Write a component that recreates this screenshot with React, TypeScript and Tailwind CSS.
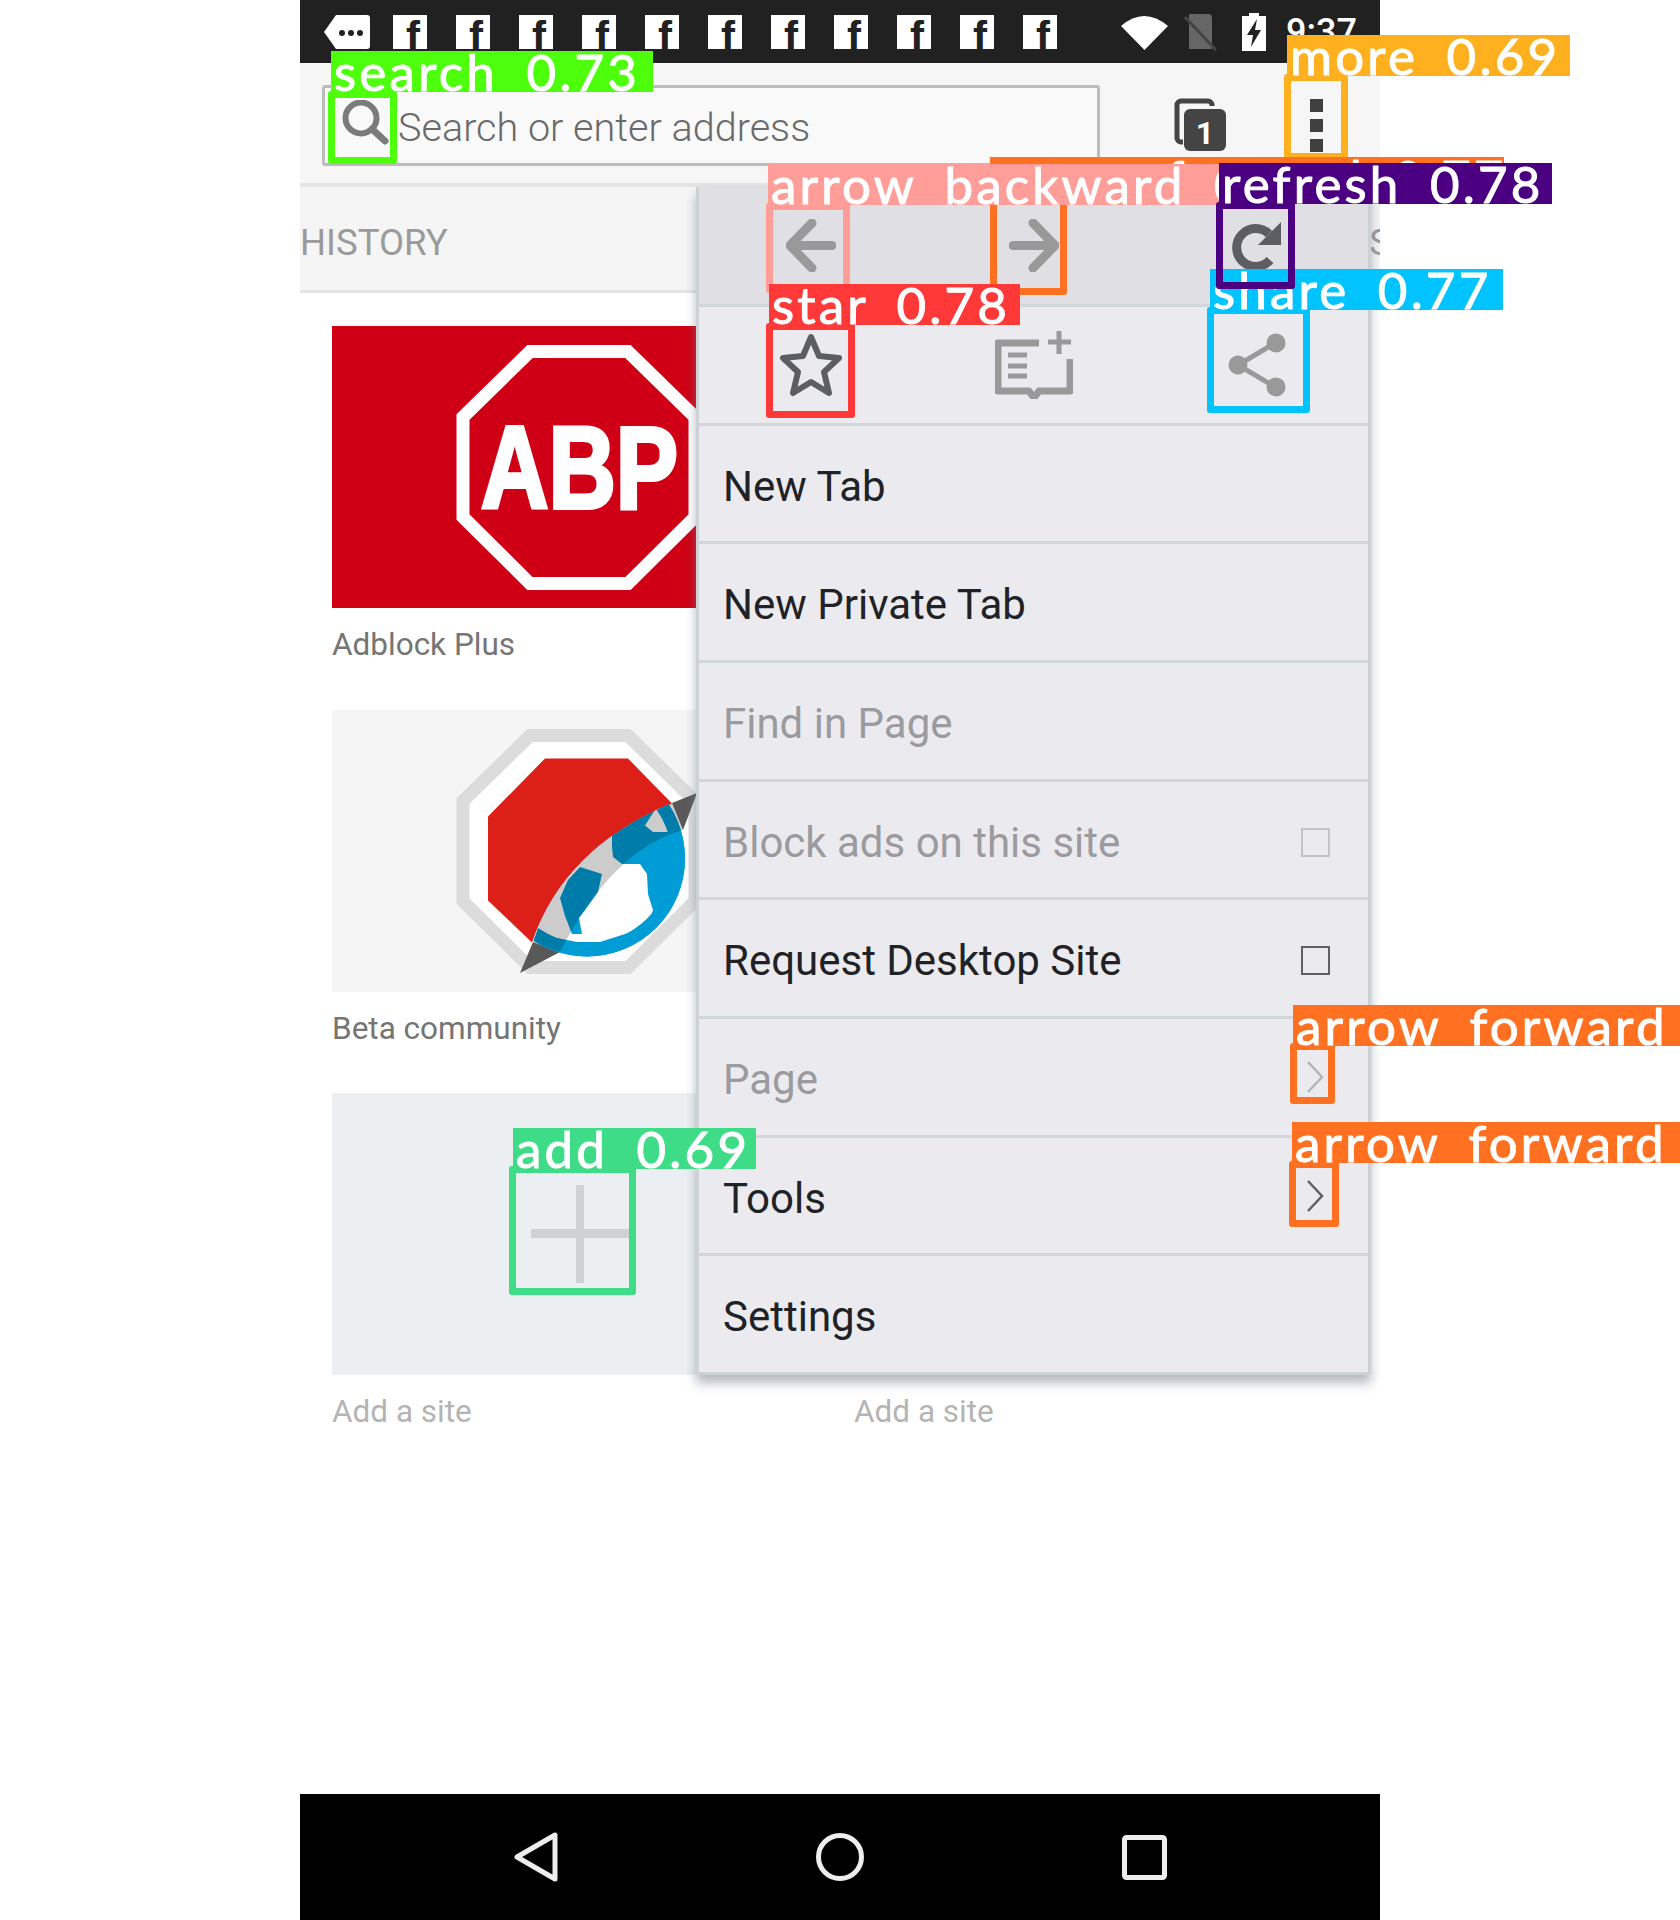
import React from "react";

const menuItems = [
  { label: "New Tab", dim: false },
  { label: "New Private Tab", dim: false },
  { label: "Find in Page", dim: true },
  { label: "Block ads on this site", dim: true, check: true },
  { label: "Request Desktop Site", dim: false, check: true },
  { label: "Page", dim: true, arrow: true },
  { label: "Tools", dim: false, arrow: true },
  { label: "Settings", dim: false },
];

// detection overlay: box + tag
const Box = ({ className }: { className: string }) => (
  <div className={`absolute border-[7px] rounded-[3px] ${className}`} />
);

const Tag = ({ text, className }: { text: string; className: string }) => (
  <div
    className={`absolute h-[41px] flex items-center overflow-hidden whitespace-pre pl-[3px] font-['Lato',sans-serif] text-[51px] leading-none tracking-[3.2px] [word-spacing:-2px] [-webkit-text-stroke:1px_white] text-white ${className}`}
  >
    {text}
  </div>
);

const FbIcon = () => (
  <div className="relative w-[34px] h-[34px] bg-white overflow-hidden">
    <span className="absolute left-[13px] top-[1px] font-['Liberation_Sans',sans-serif] font-bold text-[42px] leading-none text-[#212121]">
      f
    </span>
  </div>
);

const StatusBar = () => (
  <div className="h-[63px] shrink-0 bg-[#212121] flex items-center pl-6">
    <svg width="46" height="34" viewBox="0 0 46 34" className="mr-[23px]">
      <path d="M12 0H43a3 3 0 0 1 3 3V31a3 3 0 0 1-3 3H12L0 17Z" fill="#fff" />
      <circle cx="18" cy="18" r="3" fill="#212121" />
      <circle cx="27" cy="18" r="3" fill="#212121" />
      <circle cx="36" cy="18" r="3" fill="#212121" />
    </svg>
    <div className="flex gap-[29px]">
      {Array.from({ length: 11 }).map((_, i) => (
        <FbIcon key={i} />
      ))}
    </div>
    <svg width="47" height="36" viewBox="0 0 47 36" className="ml-[64px]">
      <path d="M0 12Q23 -8 47 12L23.5 36Z" fill="#fff" />
    </svg>
    <svg width="34" height="38" viewBox="0 0 34 38" className="ml-[16px]">
      <path d="M5 1H24a4 4 0 0 1 4 4V36H5Z" fill="#666" />
      <path d="M1 4L32 37" stroke="#444" strokeWidth="3" />
    </svg>
    <svg width="24" height="38" viewBox="0 0 24 38" className="ml-[24px]">
      <path d="M7 0H17V3H24V38H0V3H7Z" fill="#fff" />
      <path d="M15 6L5 22H11L9 34L19 17H13Z" fill="#212121" />
    </svg>
    <span className="ml-5 font-['Roboto',sans-serif] font-medium text-[36px] leading-none text-white">9:37</span>
  </div>
);

const Toolbar = () => (
  <div className="h-[120px] shrink-0 bg-[#f6f6f6] flex items-start pt-[22px] pl-[22px]">
    <div className="w-[778px] h-[81px] border-[3px] border-[#bcbcbc] rounded-[3px] bg-[#f9f9f9] flex items-center pl-[17px]">
      <svg width="47" height="45" viewBox="0 0 47 45" className="mt-[-6px]">
        <circle cx="19" cy="18" r="15.5" fill="none" stroke="#7b7b7b" strokeWidth="6" />
        <path d="M30 29L43 41" stroke="#7b7b7b" strokeWidth="7" strokeLinecap="round" />
      </svg>
      <span className="ml-[9px] mt-[5px] font-['Roboto',sans-serif] font-light text-[39.6px] text-[#6a6a6a]">Search or enter address</span>
    </div>
    <svg width="53" height="53" viewBox="0 0 53 53" className="ml-[74px] mt-[13px]">
      <path d="M9 44H7a4 4 0 0 1-4-4V7a4 4 0 0 1 4-4H34a4 4 0 0 1 4 4V8" fill="none" stroke="#444" strokeWidth="5" />
      <rect x="10" y="11" width="42" height="42" rx="6" fill="#444" />
      <text x="31" y="46" textAnchor="middle" className="font-['Roboto',sans-serif] font-bold text-[32px] fill-white">
        1
      </text>
    </svg>
    <div className="ml-[83px] mt-[14px] flex flex-col gap-[7px]">
      <div className="w-[13px] h-[13px] bg-[#404040]" />
      <div className="w-[13px] h-[13px] bg-[#404040]" />
      <div className="w-[13px] h-[13px] bg-[#404040]" />
    </div>
  </div>
);

const AbpLogo = () => (
  <svg viewBox="0 0 490 282" className="w-full h-full">
    <polygon points="198,25.5 296,25.5 363,91 363,191 296,257.5 198,257.5 131,191 131,91" fill="none" stroke="#fff" strokeWidth="13" />
    <text
      x="149"
      y="182"
      textLength="197"
      lengthAdjust="spacingAndGlyphs"
      stroke="#fff"
      strokeWidth="4"
      className="font-['Liberation_Sans',sans-serif] font-bold text-[116px] fill-white"
    >
      ABP
    </text>
  </svg>
);

const BetaLogo = () => (
  <svg viewBox="0 0 490 282" className="w-full h-full">
    <defs>
      <clipPath id="globe-clip">
        <path d="M190 263L201 232Q232 138 340 93L368 80L400 300H190Z" />
      </clipPath>
    </defs>
    <polygon points="198,25.5 296,25.5 363,91 363,191 296,257.5 198,257.5 131,191 131,91" fill="#fff" stroke="#dcdcdc" strokeWidth="13" />
    <path d="M213 48.5H296L340 93.5Q232 138 200 232.5L156 190.5V106.5Z" fill="#dc1f17" />
    <polygon points="188,263 201,232 228,242" fill="#595959" />
    <polygon points="365,83 340,93 351,120" fill="#595959" />
    <g clipPath="url(#globe-clip)">
      <circle cx="255" cy="148.5" r="98" fill="#009cd5" />
      <polygon
        points="195,232 215,120 280,120 280,137 281,147 290,154 308,154 315,164 316,184 321,200 315,217 268,232 245,232 225,228"
        fill="#fff"
      />
      <polygon points="313,115.5 326,95 340,122 321,122" fill="#fff" />
      <polygon points="248,157 270,164 266,182 256,196 247,208 250,224 240,224 233,206 228,188 236,170" fill="#009cd5" />
      <circle cx="255" cy="148.5" r="91.5" fill="none" stroke="#009cd5" strokeWidth="13" />
      <path d="M201 232Q232 138 340 93L351 120Q280 140 228 242Z" fill="#000" fillOpacity="0.2" />
    </g>
  </svg>
);

const Tile = ({ label, faint, className, children }: { label: string; faint?: boolean; className: string; children?: React.ReactNode }) => (
  <div className="h-[383.5px]">
    <div className={`h-[282px] ${className}`}>{children}</div>
    <div className={`mt-[18px] font-['Roboto',sans-serif] text-[31.5px] leading-[37px] ${faint ? "text-[#b4b4b4]" : "text-[#757575]"}`}>{label}</div>
  </div>
);

const Menu = () => (
  <div className="absolute left-[396px] top-[187px] w-[675px] h-[1188px] flex flex-col bg-[#ebebef] border-x-[3px] border-b-[3px] border-[#ccd1d6] shadow-[0_8px_10px_rgba(120,130,140,0.55)]">
    <div className="h-[120px] shrink-0 grid grid-cols-3 items-center justify-items-center bg-[#e0e0e4] border-b-[3px] border-[#d0d6da]">
      <svg width="50" height="53" viewBox="0 0 50 53">
        <path d="M46 26.5H6M26 4L4 26.5L26 49" fill="none" stroke="#999" strokeWidth="9" strokeLinecap="round" strokeLinejoin="round" />
      </svg>
      <svg width="50" height="53" viewBox="0 0 50 53">
        <path d="M4 26.5H44M24 4L46 26.5L24 49" fill="none" stroke="#999" strokeWidth="9" strokeLinecap="round" strokeLinejoin="round" />
      </svg>
      <svg width="50" height="48" viewBox="0 0 50 48">
        <path d="M37 12A19 19 0 1 0 38 38" fill="none" stroke="#5c5e63" strokeWidth="9" />
        <path d="M49 0V23H26Z" fill="#5c5e63" />
      </svg>
    </div>
    <div className="flex-1 grid grid-cols-3 items-center justify-items-center border-b-[3px] border-[#d0d6da]">
      <svg width="64" height="64" viewBox="0 0 64 64">
        <path d="M32 4L40 23L60 25L45 39L50 60L32 49L14 60L19 39L4 25L24 23Z" fill="none" stroke="#5c5e63" strokeWidth="6" strokeLinejoin="round" />
      </svg>
      <svg width="78" height="68" viewBox="0 0 78 68">
        <path d="M44 12H3V60H34L39 67L44 60H75V28" fill="none" stroke="#999" strokeWidth="7" strokeLinejoin="round" />
        <path d="M13 24H32M13 35H32M13 45H32M64 0V23M53 11H76" fill="none" stroke="#999" strokeWidth="5" />
      </svg>
      <svg width="58" height="64" viewBox="0 0 58 64">
        <path d="M47 10L10 32L47 54" fill="none" stroke="#999" strokeWidth="5" />
        <circle cx="48" cy="10" r="9.5" fill="#999" />
        <circle cx="10" cy="32" r="9.5" fill="#999" />
        <circle cx="48" cy="54" r="9.5" fill="#999" />
      </svg>
    </div>
    {menuItems.map((item, i) => (
      <div
        key={item.label}
        className={`flex-1 flex items-center justify-between pl-[24px] pr-[38px] ${i < menuItems.length - 1 ? "border-b-[3px] border-[#d0d6da]" : ""}`}
      >
        <span className={`mt-[5px] font-['Roboto',sans-serif] text-[42px] ${item.dim ? "text-[#9b9b9f]" : "text-[#212225]"}`}>{item.label}</span>
        {item.check && (
          <div className={`mt-[5px] w-[29px] h-[29px] border-2 ${item.dim ? "border-[#c4c4c8]" : "border-[#5f6064]"}`} />
        )}
        {item.arrow && (
          <svg width="17" height="32" viewBox="0 0 17 32" className="mr-[6px]">
            <path d="M1 1L15 16L1 31" fill="none" stroke={item.dim ? "#b4b4b8" : "#5f6064"} strokeWidth="2.5" />
          </svg>
        )}
      </div>
    ))}
  </div>
);

const Overlays = () => (
  <>
    <Box className="left-[328px] top-[91px] w-[69px] h-[73px] border-[#4dff0a]" />
    <Tag text="search  0.73" className="left-[331px] top-[51px] w-[322px] bg-[#4dff0a]" />
    <Box className="left-[1284px] top-[74px] w-[64px] h-[86px] border-[#ffb01f]" />
    <Tag text="more  0.69" className="left-[1287px] top-[35px] w-[283px] bg-[#ffb01f]" />

    <Box className="left-[990px] top-[195px] w-[77px] h-[100px] border-[#ff7120]" />
    <Tag text="arrow  forward  0.77" className="left-[990px] top-[157px] w-[514px] bg-[#ff7120]" />
    <Box className="left-[766px] top-[203px] w-[84px] h-[90px] border-[#ff9e98]" />
    <Tag text="arrow  backward  0.77" className="left-[768px] top-[164px] w-[451px] bg-[#ff9e98]" />

    <Box className="left-[1207px] top-[307px] w-[103px] h-[106px] border-[#00c3ff]" />
    <Tag text="share  0.77" className="left-[1210px] top-[269px] w-[293px] bg-[#00c3ff]" />
    <Box className="left-[1216px] top-[202px] w-[79px] h-[87px] border-[#4b0082]" />
    <Tag text="refresh  0.78" className="left-[1219px] top-[163px] w-[333px] bg-[#4b0082]" />

    <Box className="left-[766px] top-[323px] w-[89px] h-[95px] border-[#ff3838]" />
    <Tag text="star  0.78" className="left-[769px] top-[284px] w-[251px] bg-[#ff3838]" />

    <Box className="left-[509px] top-[1166px] w-[127px] h-[129px] border-[#3fdc88]" />
    <Tag text="add  0.69" className="left-[513px] top-[1128px] w-[243px] bg-[#3fdc88]" />

    <Box className="left-[1290px] top-[1043px] w-[45px] h-[61px] border-[#ff7120]" />
    <Tag text="arrow  forward" className="left-[1293px] top-[1005px] w-[387px] bg-[#ff7120]" />
    <Box className="left-[1289px] top-[1161px] w-[50px] h-[66px] border-[#ff7120]" />
    <Tag text="arrow  forward" className="left-[1292px] top-[1122px] w-[388px] bg-[#ff7120]" />
  </>
);

export default function App() {
  return (
    <div className="relative w-[1680px] h-[1920px] bg-white overflow-hidden">
      <div className="relative ml-[300px] w-[1080px] h-full flex flex-col overflow-hidden">
        <StatusBar />
        <Toolbar />
        <div className="h-[110px] shrink-0 bg-[#f5f5f5] border-t-[4px] border-b-[3px] border-[#e4e4e4] flex items-center justify-between font-['Roboto',sans-serif] text-[36.5px] text-[#9a9a9a]">
          <span className="mt-[10px]">HISTORY</span>
          <span className="mt-[10px] mr-[-11px]">S</span>
        </div>

        <div className="flex-1 grid grid-cols-[490px_490px] gap-x-8 content-start pl-8 pt-[33px]">
          <Tile label="Adblock Plus" className="bg-[#cf0015]">
            <AbpLogo />
          </Tile>
          <Tile label="" className="bg-[#f5f5f6]" />
          <Tile label="Beta community" className="bg-[#f5f5f6]">
            <BetaLogo />
          </Tile>
          <Tile label="" className="bg-[#f5f5f6]" />
          <Tile label="Add a site" faint className="bg-[#ebeff2] relative">
            <div className="absolute left-[244px] top-[92px] w-2 h-[98px] bg-[#ced2d5]" />
            <div className="absolute left-[199px] top-[136px] w-[98px] h-[9px] bg-[#ced2d5]" />
          </Tile>
          <Tile label="Add a site" faint className="bg-[#ebeff2]" />
        </div>

        <div className="h-[126px] shrink-0 bg-black flex items-center justify-center gap-[258px]">
          <svg width="44" height="50" viewBox="0 0 44 50">
            <path d="M41 3V47L3 25Z" fill="none" stroke="#eee" strokeWidth="5" strokeLinejoin="round" />
          </svg>
          <svg width="48" height="50" viewBox="0 0 48 50">
            <circle cx="24" cy="25" r="21.5" fill="none" stroke="#eee" strokeWidth="5" />
          </svg>
          <svg width="45" height="45" viewBox="0 0 45 45">
            <rect x="2.5" y="2.5" width="40" height="40" rx="2" fill="none" stroke="#eee" strokeWidth="5" />
          </svg>
        </div>

        <Menu />
      </div>
      <Overlays />
    </div>
  );
}
